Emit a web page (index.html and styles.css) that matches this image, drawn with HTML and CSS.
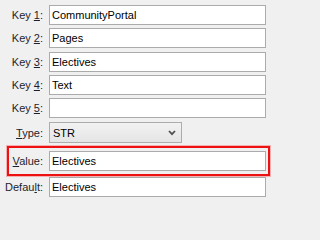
FILE: index.html
```html
<!DOCTYPE html>
<html>
<head>
<meta charset="utf-8">
<link rel="stylesheet" href="styles.css">
</head>
<body>
<div class="form">
  <div class="row">
    <label class="lbl">Key <u>1</u>:</label>
    <input class="field" type="text" value="CommunityPortal">
  </div>
  <div class="row">
    <label class="lbl">Key <u>2</u>:</label>
    <input class="field" type="text" value="Pages">
  </div>
  <div class="row plus1">
    <label class="lbl">Key <u>3</u>:</label>
    <input class="field" type="text" value="Electives">
  </div>
  <div class="row">
    <label class="lbl">Key <u>4</u>:</label>
    <input class="field" type="text" value="Text">
  </div>
  <div class="row">
    <label class="lbl">Key <u>5</u>:</label>
    <input class="field" type="text" value="">
  </div>
  <div class="row plus1">
    <label class="lbl"><u>T</u>ype:</label>
    <div class="combo">
      <span class="combo-text">STR</span>
      <svg class="chev" width="8" height="6" viewBox="0 0 8 6"><polyline points="1,1 4,4.2 7,1" fill="none" stroke="#505050" stroke-width="1.8"/></svg>
    </div>
  </div>
  <div class="row highlight">
    <label class="lbl lbl-in"><u>V</u>alue:</label>
    <input class="field" type="text" value="Electives">
  </div>
  <div class="row tight">
    <label class="lbl">Defau<u>l</u>t:</label>
    <input class="field" type="text" value="Electives">
  </div>
</div>
</body>
</html>
```
FILE: styles.css
```css
html, body {
  margin: 0;
  padding: 0;
  background: #f0f0f0;
}
body {
  width: 271px;
  height: 202px;
  overflow: hidden;
  font-family: "Liberation Sans", Arial, sans-serif;
  font-size: 11px;
  color: #1e1e2e;
}
.form {
  display: flex;
  flex-direction: column;
  gap: 3px;
  padding-top: 5px;
}
.row {
  display: flex;
  align-items: center;
  gap: 6px;
}
.row.plus1 {
  margin-top: 1px;
}
.row.tight {
  margin-top: -2px;
}
.lbl {
  width: 43px;
  flex: none;
  text-align: right;
  white-space: nowrap;
}
.lbl u {
  text-underline-offset: 1px;
}
.field {
  box-sizing: border-box;
  width: 217px;
  height: 20px;
  margin: 0;
  padding: 0 2px;
  border: 1px solid #ababab;
  background: #fff;
  font-family: "Liberation Sans", Arial, sans-serif;
  font-size: 11px;
  color: #000;
  outline: none;
}
.combo {
  box-sizing: border-box;
  width: 133px;
  height: 21px;
  border: 1px solid #acacac;
  background: linear-gradient(#f2f2f2, #e5e5e5);
  display: flex;
  align-items: center;
  justify-content: space-between;
  padding: 0 5px 0 3px;
  color: #000;
}
.chev {
  display: block;
}
.highlight {
  box-sizing: border-box;
  margin-left: 7px;
  width: 263px;
  padding: 3px 0;
  border: 2px solid #ee1111;
  box-shadow: 0 0 0 1px rgba(255, 60, 60, 0.35);
}
.lbl-in {
  width: 34px;
}
```
